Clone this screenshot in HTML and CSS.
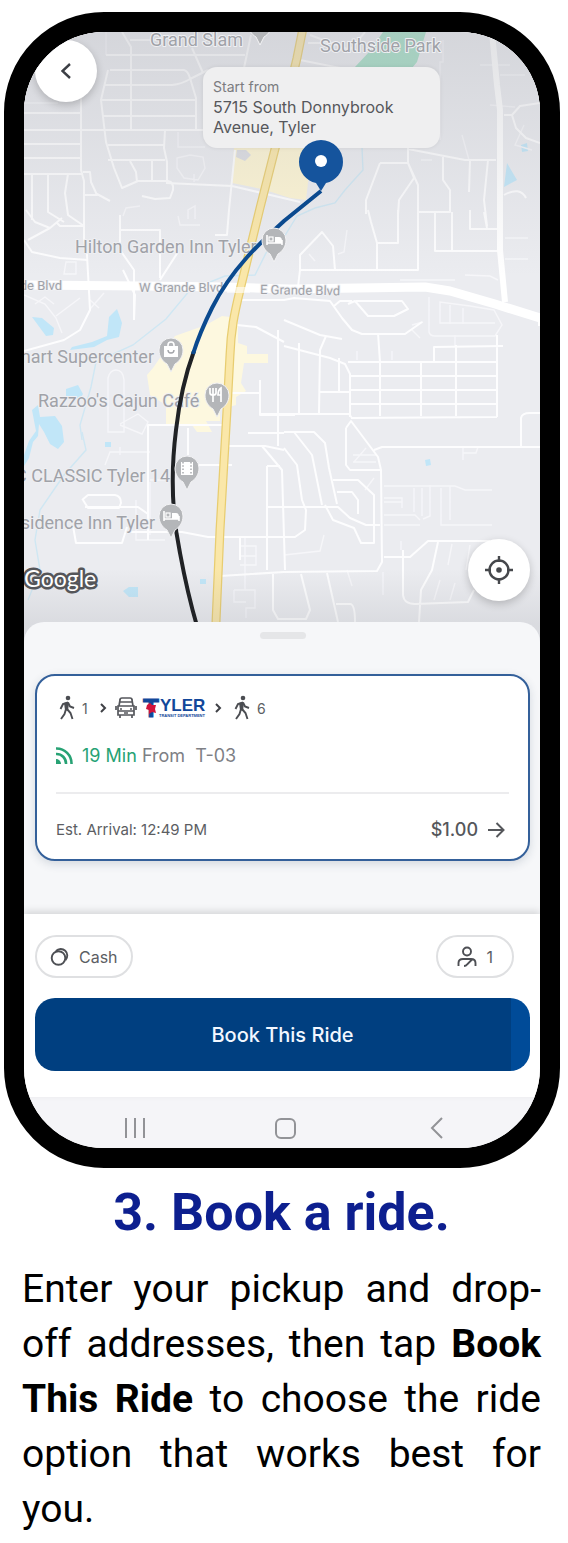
FILE: index.html
```html
<!DOCTYPE html>
<html lang="en">
<head>
    <meta charset="UTF-8">
    <meta name="viewport" content="width=device-width, initial-scale=1.0">
    <title>Book a ride</title>
    <link rel="stylesheet" href="styles.css">
</head>
<body>
    <div class="phone">
        <div class="map">
            <svg class="mapCanvas" viewBox="24 32 516 610" preserveAspectRatio="xMidYMin slice" role="img" aria-label="Route map">
                <defs>
                    <linearGradient id="shade" x1="0" y1="0" x2="0" y2="1">
                        <stop offset="0" stop-color="#a9abb2" stop-opacity="0.34"/>
                        <stop offset="0.4" stop-color="#a9abb2" stop-opacity="0"/>
                        <stop offset="0.88" stop-color="#8c8f96" stop-opacity="0"/>
                        <stop offset="0.97" stop-color="#8c8f96" stop-opacity="0.18"/>
                    </linearGradient>
                    <g id="poi">
                        <path d="M0 22 L-4 14 C-9 11 -12 6 -12 0 A12 12 0 0 1 12 0 C12 6 9 11 4 14 Z" fill="#b4b6b9" stroke="#f3f3f5" stroke-width="1"/>
                    </g>
                    <g id="bed" fill="none" stroke="#fff" stroke-width="1.6">
                        <path d="M-7 -5 V5 M-7 3 H8 V5 M8 3 V0"/>
                        <rect x="-5" y="-3" width="4" height="4" stroke-width="1.2"/>
                        <path d="M1 -3 H5 Q8 -3 8 1 V3 H1 Z" fill="#fff" stroke="none"/>
                    </g>
                </defs>
                <rect x="24" y="32" width="516" height="610" fill="#ebecf0"/>

                <!-- parks and commercial areas -->
                <path d="M383 32 H426 L417 62 L412 68 H354 L370 51 Z" fill="#a5dfc6"/>
                <path d="M234 148 H312 L306 200 L290 198 L262 189 L232 183 Z" fill="#fdf5d4"/>
                <path d="M237 150 h9 l5 5 -6 6 -9 -4 Z" fill="#dcdde2"/>
                <path d="M153 368 L175 336 L206 325 L222 316 L238 318 V343 L247 346 V354 H268 V363 H244 L241 383 L246 391 L236 397 V405 L220 410 V421 H206 L212 432 H197 L192 425 H166 V405 L150 395 L147 375 Z" fill="#fdf8df"/>

                <!-- water -->
                <g fill="#c1e6f8">
                    <path d="M32 317 L42 318 L54 328 L53 335 L46 336 Z"/>
                    <path d="M72 347 L92 342 L107 336 L109 317 L117 309 L122 323 L119 337 L107 340 L94 347 L70 350 Z"/>
                    <path d="M66 389 L78 385 L83 394 L80 399 L66 397 Z"/>
                    <path d="M32 410 L38 405 L40 417 L55 416 L62 426 L64 442 L58 449 L50 444 L44 432 L39 424 L38 436 L33 442 L29 458 L24 466 V455 L29 441 L36 431 Z"/>
                    <path d="M105 442 h6 v5 h-6 Z M123 591 l6 -4 h9 v10 h-9 Z M200 579 h6 v5 h-6 Z"/>
                    <path d="M425 460 l5 -1 1 6 -5 1 Z M507 163 L517 180 L504 187 Z M521 145 l6 -2 1 8 -6 1 Z"/>
                </g>
                <g fill="none" stroke="#cfe7f3" stroke-width="1.4">
                    <path d="M362 148 L363 170 L345 190 L335 203 L315 208 L297 216 L284 237 L266 253 L255 275 L225 276 L190 290 L166 319 L133 345 L96 362 L91 387 L80 425 L82 440"/>
                    <path d="M82 432 L86 450 L64 475 L40 510 L35 540 L40 570 L28 600"/>
                </g>

                <!-- faint streets -->
                <g fill="none" stroke="#f6f6f9" stroke-width="1.4">
                    <path d="M106 32 V55 M24 103 H58 M178 132 V147 H205 M177 158 L190 155 L203 157 L205 168 L198 180 L184 178 L177 168 Z M194 182 V174"/>
                    <path d="M123 216 L126 208 L140 206 M188 219 V210 L195 206 V219 M178 216 L180 225 H200 M64 274 H76 V262 H66 Z M24 295 L45 304 L56 318 L62 333 M35 304 L45 297 L54 304 M56 316 L80 298 M90 309 L104 293 M90 300 l9 8"/>
                    <path d="M108 400 V378 Q110 370 116 370 Q123 370 124 380 V432 H108 Z M120 425 L142 434 L148 422 L138 414 L120 424 M105 465 L110 452 H150 M120 455 V447 M150 480 H165 M136 500 V540 H165 M150 535 V482"/>
                    <path d="M443 40 V62 H440 V140 M480 65 H510 M490 105 L515 107 M500 75 H525 M524 125 L515 145 L532 150 M505 238 H528 M505 259 H528 M465 275 L490 276 L498 280"/>
                    <path d="M429 297 V332 Q430 336 435 336 H495 L502 325 L494 310 L470 306 L440 302 V323 H495 M450 305 V324 M463 308 V324 M455 335 V347 M357 360 v-9 M392 360 v-9"/>
                    <path d="M354 462 L366 448 M353 455 H376 M353 462 H376 M463 448 V460 M463 453 H476 L478 447 M384 486 H455 L465 490 H492 M384 498 H402 V508 M384 502 H402 M384 515 H415 L420 520 M414 488 V512 M422 488 V516 M430 485 V516 L423 519 M441 488 V525 H492 M450 486 V520"/>
                    <path d="M384 525 H420 M401 541 V550 M452 544 L448 565 M440 580 L434 600 M455 583 L450 600 M470 545 L466 570 M383 572 V595 M347 570 L352 586 M365 490 L374 478"/>
                    <path d="M284 555 L320 551 L324 535 M245 537 V575 M240 546 H256 V565 H240 M240 556 H256 M245 575 V590 M234 590 H255 V608 H246 V618 M234 590 V602 H246 M309 254 L315 261 M347 230 L344 252 L338 254"/>
                    <path d="M421 160 H432 M400 280 H455 M412 325 L423 322 M412 330 L420 338 M462 135 L469 160"/>
                </g>

                <!-- local streets -->
                <g fill="none" stroke="#fdfdfe" stroke-width="2" stroke-linejoin="round">
                    <path d="M24 113 H81 M24 130 H205 M24 144 H80 M24 158 H80 M24 174 H83 M81 98 V170 L84 181 V222"/>
                    <path d="M110 70 H184 Q188 71 190 78 L196 98 V130 M108 70 L101 100 L106 142 L114 168 L122 188 L138 181 H168 Q174 182 173 190 L170 198 L155 199 L142 196"/>
                    <path d="M104 85 H172 Q182 84 190 79 L208 70 M101 100 H195 M102 116 H195 M122 32 L131 47 V129 M130 40 H160 M106 55 H245 M192 48 L203 73 M251 35 L244 68"/>
                    <path d="M165 130 L164 148 L167 162 V182 M108 145 H164 M108 160 H165 M130 161 L136 172 L137 182 M152 161 V181 M166 183 L232 186 L262 193 L300 202 M235 150 L229 210 L227 235 H215"/>
                    <path d="M83 172 H90 L91 182 L97 195 H85 M97 194 L110 201 M32 174 V220 M48 174 V212 L64 222 M68 174 L65 193 L68 215 L84 226 M84 200 V240 L87 255 L90 310 L80 330 L64 340 L24 351"/>
                    <path d="M26 210 L35 222 L50 228 L28 240 M50 228 L62 218 M24 240 L32 252 L60 258 L88 260 M56 222 L60 226 H84 M123 270 L135 295 L134 320 M120 215 V250 L134 270 V320"/>
                    <path d="M120 230 H160 V278 M178 252 L160 280 M240 300 H284 L294 298 L330 301 L342 318 L352 330 L362 334 H405 L422 322 M237 325 L256 327 L284 342"/>
                    <path d="M284 346 L330 358 L345 364 L350 374 V417 M284 320 L320 335 L342 339 M326 336 L320 350 L319 413 M339 358 V392 M319 392 H349 M299 343 V414 M260 414 H349 L352 418"/>
                    <path d="M348 362 H497 M350 376 H497 M351 390 H497 M351 404 H497 M351 418 L497 417 M380 362 V416 M421 362 V416 M456 345 V416 M497 335 V417 M434 362 V347 L503 346 M378 333 L380 362"/>
                    <path d="M348 304 L355 301 L368 316 H394 L408 309 L402 301 H356 M334 306 L340 301 H352 M300 270 H418 V210 M300 270 V255 L322 232 L333 246 L335 270 M300 270 L297 295 M377 270 V243 L371 222 L368 210"/>
                    <path d="M377 243 H398 V210 M380 163 H408 L414 178 L399 200 L398 215 M366 214 V200 L380 163 M408 148 V163 L418 185 L418 212 H450 M418 212 H450 V190 L443 180 V157 M408 149 L465 160 H496 M470 160 L469 192 M488 160 L484 200 L487 226 M435 212 V251 H498 M452 212 V250 M470 210 V229 H498 M484 212 L487 228"/>
                    <path d="M504 115 H512 L520 106 L540 103 M512 115 L516 128 L526 138 L540 143 M504 195 Q520 186 526 198 M310 35 L350 50 L365 32 M308 43 H340 M300 60 L340 68"/>
                    <path d="M148 540 V425 H222 M188 428 V455 M188 465 H232 M228 446 H265 L284 450 M262 446 L282 470 L285 570 M260 380 V415 H295 M232 393 H260 M278 330 V446 M248 433 H284"/>
                    <path d="M267 466 H280 M267 466 V570 M268 507 H338 L350 518 L366 525 H380 M284 432 H314 L325 443 L329 468 L337 504 M294 432 L312 455 L322 505 M325 505 L333 520 L354 528 L361 543 H374 V495 L358 480 H333 M337 492 H352 L358 500 V514"/>
                    <path d="M284 448 L297 465 L302 500 L306 510 L305 530 L295 537 H284 M346 428 L351 421 L378 457 L381 470 L382 562 L377 571 L284 572 L220 576 M346 428 V465 L350 470 H380 M374 450 L382 447 H540 M521 447 V418 Q522 413 530 413 H540"/>
                    <path d="M384 557 H410 L428 541 H490 M403 550 V595 Q404 604 415 604 L468 602 L474 590 M438 542 L432 570 L421 590 L419 622 M301 574 L310 610 L306 619 H278 L273 610 V574 M327 573 L338 622 M336 604 H350 Q355 604 355 622"/>
                    <path d="M82 500 L88 495 H115 Q121 496 121 503 L119 508 H88 L83 500 M85 507 H138 L148 514 M73 526 L76 543 H122 L127 527 M127 532 H182 L208 537 H285 M240 537 V560"/>
                </g>

                <!-- main roads -->
                <g fill="none" stroke="#fff" stroke-linejoin="round">
                    <path d="M492 32 L497 85 L500 110 V250 L505 302" stroke-width="6"/>
                    <path d="M24 285 L142 286 L225 287 L290 289 L425 287 L450 291 L495 304 L540 318" stroke-width="9"/>
                    <path d="M540 318 V326" stroke-width="4"/>
                </g>

                <!-- highway -->
                <path d="M303 28 L297 58 L276 145 L260 208 L240 290 C234 315 231 330 230 355 L227 410 L220 530 L215 645" fill="none" stroke="#e8cd70" stroke-width="9"/>
                <path d="M303 28 L297 58 L276 145 L260 208 L240 290 C234 315 231 330 230 355 L227 410 L220 530 L215 645" fill="none" stroke="#fae7a9" stroke-width="6.5"/>
                <path d="M227 290 H250" fill="none" stroke="#fff" stroke-width="6" opacity="0.6"/>

                <rect x="24" y="32" width="516" height="610" fill="url(#shade)"/>

                <g class="place">
                    <text x="150" y="46">Grand Slam</text>
                    <text x="320" y="52">Southside Park</text>
                    <text x="75" y="253">Hilton Garden Inn Tyler</text>
                    <text x="154" y="363" text-anchor="end">Walmart Supercenter</text>
                    <text x="38" y="407">Razzoo's Cajun Café</text>
                    <text x="170" y="482" text-anchor="end">AMC CLASSIC Tyler 14</text>
                    <text x="155" y="529" text-anchor="end">Residence Inn Tyler</text>
                </g>
                <g class="road">
                    <text x="62" y="290" text-anchor="end">W Grande Blvd</text>
                    <text x="139" y="292">W Grande Blvd</text>
                    <text x="260" y="294" transform="rotate(1 260 294)">E Grande Blvd</text>
                </g>

                <!-- route -->
                <path d="M194 351 C187 370 180 395 176 430 C171 470 171 510 180 553 C185 580 190 602 197 626" fill="none" stroke="#202225" stroke-width="4"/>
                <path d="M321 191 L284 221 C262 241 232 268 212 308 C205 322 198 338 193 354" fill="none" stroke="#0b4a8f" stroke-width="4"/>

                <use href="#poi" x="260" y="23"/>
                <use href="#poi" x="274" y="240"/>
                <use href="#bed" x="274" y="240"/>
                <use href="#poi" x="171" y="350"/>
                <path d="M164 346 h14 v11 h-14 Z" fill="#fff"/>
                <path d="M168 347 v-2 a3 3 0 0 1 6 0 v2" fill="none" stroke="#fff" stroke-width="1.6"/>
                <path d="M168 350 a3 3 0 0 0 6 0" fill="none" stroke="#a4a6aa" stroke-width="1.4"/>
                <use href="#poi" x="217" y="395"/>
                <path d="M210 388 v5 q0 2 3 2 q3 0 3 -2 v-5 M213 388 v14 M221 402 v-14 q-3 2 -3 7 h3" fill="none" stroke="#fff" stroke-width="1.7"/>
                <use href="#poi" x="187" y="468"/>
                <rect x="181" y="462" width="12" height="13" fill="#fff"/>
                <path d="M183 462 V475 M191 462 V475" stroke="#a4a6aa" stroke-width="1.4" stroke-dasharray="1.5 1.8"/>
                <use href="#poi" x="171" y="516"/>
                <use href="#bed" x="171" y="516"/>

                <text class="google" x="24" y="587">Google</text>
            </svg>

            <div class="pickup">
                <span class="pickupLabel">Start from</span>
                <span class="pickupAddress">5715 South Donnybrook Avenue, Tyler</span>
            </div>
            <svg class="pickupPin" viewBox="0 0 46 54" aria-hidden="true">
                <path d="M23 52 L18 44 C8 42 1 33 1 23 A22 22 0 0 1 45 23 C45 33 38 42 28 44 Z" fill="#15549d"/>
                <circle cx="23" cy="22" r="6" fill="#fff"/>
            </svg>

            <button class="roundButton back" aria-label="Back">
                <svg width="24" height="24" viewBox="0 0 24 24"><path d="M16 5 L8.500 12 L16 19" fill="none" stroke="#3c3f45" stroke-width="2.400"/></svg>
            </button>
            <button class="roundButton locate" aria-label="My location">
                <svg width="30" height="30" viewBox="0 0 30 30" fill="none" stroke="#46484c" stroke-width="2.400">
                    <circle cx="15" cy="15" r="9.500"/>
                    <circle cx="15" cy="15" r="2.800" fill="#46484c" stroke="none"/>
                    <path d="M15 1 V7 M15 23 V29 M1 15 H7 M23 15 H29"/>
                </svg>
            </button>
        </div>

        <div class="sheet">
            <div class="handle"></div>
            <div class="trip">
                <div class="legs">
                    <svg class="walker" viewBox="0 0 18 26"><use href="#walk"/></svg>
                    <span class="minutes">1</span>
                    <svg class="chevron" viewBox="0 0 8 10"><path d="M2 1 L6 5 L2 9" fill="none" stroke="#3f4146" stroke-width="2"/></svg>
                    <svg class="bus" viewBox="0 0 22 22" fill="none" stroke="#55575c" stroke-width="1.700">
                        <path d="M4 9 L5 3 Q5 1 7 1 H15 Q17 1 17 3 L18 9 M5 5 H17 M3 9 H19 V18 H3 Z M3 14 H19 M1 9 V13 M21 9 V13 M5 18 V21 M17 18 V21"/>
                        <path d="M5 12 H7 M15 12 H17 M9 16 H13" stroke-width="1.500"/>
                    </svg>
                    <svg class="tyler" viewBox="0 0 62 22" role="img" aria-label="Tyler Transit Department">
                        <text class="tylerT" x="1" y="20">T</text>
                        <path d="M5 8 L8 6 L10 8 L14 8 L13 12 L14 16 L10 15 L7 17 L7 13 L4 12 Z" fill="#d0143c"/>
                        <text class="tylerName" x="18" y="14">YLER</text>
                        <text class="tylerDept" x="17" y="20">TRANSIT DEPARTMENT</text>
                    </svg>
                    <svg class="chevron" viewBox="0 0 8 10"><path d="M2 1 L6 5 L2 9" fill="none" stroke="#3f4146" stroke-width="2"/></svg>
                    <svg class="walker" viewBox="0 0 18 26">
                        <g id="walk">
                            <circle cx="10" cy="3" r="2.300" fill="#4b4d52"/>
                            <path d="M6 8 L10 7 L11 8 L10 16 L7 15 Z" fill="#4b4d52"/>
                            <path d="M10 7.500 L5 9 L2.500 14 M10 7.500 L12 11.500 L16 13 M8 14 L6.500 19 L3 24 M9 14 L12.500 18 L14.500 24" fill="none" stroke="#4b4d52" stroke-width="1.900"/>
                        </g>
                    </svg>
                    <span class="minutes">6</span>
                </div>
                <div class="departure">
                    <svg class="live" viewBox="0 0 17 17" fill="none" stroke="#27a274" stroke-width="2.600">
                        <path d="M0 1.500 A15 15 0 0 1 15.500 17 M0 7 A9.500 9.500 0 0 1 10 17"/>
                        <path d="M0 12 A5 5 0 0 1 5 17 H0 Z" fill="#27a274" stroke="none"/>
                    </svg>
                    <span><span class="wait">19 Min</span> From&nbsp; T-03</span>
                </div>
                <div class="fare">
                    <span>Est. Arrival: 12:49 PM</span>
                    <a class="price" href="#">$1.00
                        <svg width="18" height="18" viewBox="0 0 18 18" fill="none" stroke="#55575b" stroke-width="2"><path d="M1 9 H16 M9.500 2 L16.500 9 L9.500 16"/></svg>
                    </a>
                </div>
            </div>
        </div>

        <div class="booking">
            <div class="options">
                <button class="pill">
                    <svg width="20" height="20" viewBox="0 0 20 20" fill="none" stroke="#4d4f54" stroke-width="1.900">
                        <circle cx="8.500" cy="11" r="6.800"/>
                        <path d="M6 4 A6.500 6.500 0 1 1 15.500 13"/>
                    </svg>
                    Cash
                </button>
                <button class="pill riders" aria-label="1 rider">
                    <svg width="20" height="22" viewBox="0 0 20 22" fill="none" stroke="#4d4f54" stroke-width="1.900">
                        <circle cx="10" cy="5.500" r="4"/>
                        <path d="M1.500 20 V17 Q1.500 13 6 13 H14 Q18.500 13 18.500 17 V20 M7 20 Q9 20 10 18.500 L15 13.500"/>
                    </svg>
                    1
                </button>
            </div>
            <button class="book">Book This Ride</button>
        </div>

        <div class="navbar">
            <button aria-label="Recent apps"><svg width="22" height="22" viewBox="0 0 22 22" fill="none" stroke="#929397" stroke-width="2"><path d="M2 1 V21 M11 1 V21 M20 1 V21"/></svg></button>
            <button aria-label="Home"><svg width="22" height="22" viewBox="0 0 22 22" fill="none" stroke="#929397" stroke-width="2"><rect x="1" y="2" width="19" height="19" rx="5"/></svg></button>
            <button aria-label="Go back"><svg width="22" height="22" viewBox="0 0 22 22" fill="none" stroke="#929397" stroke-width="2"><path d="M16 1 L6 11 L16 21"/></svg></button>
        </div>
    </div>

    <div class="step">
        <h1>3. Book a ride.</h1>
        <p>Enter your pickup and drop-off addresses, then tap <b>Book This Ride</b> to choose the ride option that works best for you.</p>
    </div>
</body>
</html>
```

FILE: styles.css
```css
* { box-sizing: border-box }
body {
    margin: 0;
    padding: 12px 8px 0 4px;
    background: #fff;
    font-family: Inter, "Liberation Sans", sans-serif;
    color: #5c5e63;
}
button { font: inherit; color: inherit; border: 0; padding: 0; cursor: pointer; }
svg { display: block; flex: none; }

.phone {
    border: 20px solid #000;
    border-radius: 100px;
    overflow: hidden;
    background: #fff;
}

/* map */
.map { position: relative; height: 610px; background: #ebecf0; }
.mapCanvas { width: 100%; height: 100%; }
.place, .road {
    font-family: Roboto, sans-serif;
    font-size: 18px;
    fill: #a0a2a8;
    stroke: #eff0f3;
    stroke-width: 2px;
    stroke-linejoin: round;
    paint-order: stroke;
}
.road { font-size: 13px; }
.google {
    font-family: Lato, sans-serif;
    font-size: 23px;
    font-weight: 400;
    fill: #fff;
    stroke: #55565a;
    stroke-width: 5px;
    stroke-linejoin: round;
    paint-order: stroke;
}
.pickup {
    position: absolute;
    left: 179px;
    top: 35px;
    width: 237px;
    padding: 10px 10px 11px;
    border-radius: 14px;
    background: #efeff0;
    box-shadow: 0 0 4px rgba(0, 0, 0, 0.08);
}
.pickupLabel { display: block; font-size: 14px; line-height: 20px; color: #7b7c80; }
.pickupAddress { display: block; font-size: 16px; line-height: 20px; color: #56575b; }
.pickupPin { position: absolute; left: 274px; top: 107px; width: 46px; height: 54px; }
.roundButton {
    position: absolute;
    display: flex;
    align-items: center;
    justify-content: center;
    width: 62px;
    height: 62px;
    border-radius: 50%;
    background: #fff;
    box-shadow: 0 3px 8px rgba(0, 0, 0, 0.2);
}
.back { left: 11px; top: 8px; }
.locate { right: 10px; bottom: 41px; }

/* trip sheet */
.sheet {
    position: relative;
    margin-top: -20px;
    padding: 10px 10px 53px 11px;
    border-radius: 20px 20px 0 0;
    background: #f6f7f9;
}
.handle { width: 46px; height: 7px; margin: 0 auto 35px; border-radius: 4px; background: #e5e6e8; }
.trip {
    padding: 18px 19px 15px;
    border: 2px solid #34609a;
    border-radius: 20px;
    background: #fff;
    box-shadow: 0 3px 10px rgba(40, 60, 90, 0.16);
}
.legs { display: flex; align-items: center; height: 28px; padding-left: 2px; }
.walker { width: 18px; height: 26px; }
.minutes { width: 8px; margin: 0 9px 0 6px; font-size: 14px; }
.chevron { width: 8px; height: 10px; }
.bus { width: 22px; height: 22px; margin: 0 5px 0 8px; }
.tyler { width: 62px; height: 22px; margin-right: 10px; overflow: visible; }
.tyler + .chevron { margin-right: 11px; }
.tylerT, .tylerName, .tylerDept { font-family: "Liberation Sans", sans-serif; font-weight: 700; fill: #12479a; }
.tylerT { font-size: 26px; stroke: #12479a; }
.tylerName { font-size: 17px; }
.tylerDept { font-size: 4px; }
.departure {
    display: flex;
    align-items: center;
    gap: 9px;
    height: 70px;
    padding-bottom: 3px;
    font-size: 18px;
    color: #7e8085;
}
.live { width: 17px; height: 17px; }
.wait { color: #27a274; }
.fare {
    display: flex;
    align-items: center;
    justify-content: space-between;
    padding: 22px 4px 0 0;
    border-top: 2px solid #ececee;
    font-size: 15px;
    line-height: 28px;
}
.price {
    display: flex;
    align-items: center;
    gap: 9px;
    font-size: 18px;
    font-weight: 500;
    color: #55575b;
    text-decoration: none;
}

/* payment and booking */
.booking {
    position: relative;
    padding: 21px 10px 26px 11px;
    background: #fff;
    box-shadow: 0 -3px 7px rgba(0, 0, 0, 0.13);
}
.options { display: flex; justify-content: space-between; padding-right: 16px; }
.pill {
    display: flex;
    align-items: center;
    gap: 9px;
    height: 43px;
    padding: 0 13px;
    border: 2px solid #dfe0e2;
    border-radius: 22px;
    background: #fff;
    font-size: 16px;
}
.riders { padding: 0 19px; }
.book {
    width: 100%;
    height: 73px;
    margin-top: 20px;
    border-radius: 20px;
    background: linear-gradient(to left, #004b98 19px, #003f80 19px);
    color: #f2f7ff;
    font-size: 20px;
    font-weight: 500;
}
.navbar {
    display: flex;
    justify-content: center;
    gap: 129px;
    height: 51px;
    padding: 20px 0 9px 8px;
    background: #f5f5f8;
}
.navbar button { background: none; }

/* instructions */
.step { padding: 16px 19px 0 18px; font-family: Roboto, sans-serif; color: #000; }
.step h1 { margin: 0; font-size: 52px; line-height: 58px; font-weight: 700; text-align: center; color: #0d1f8f; }
.step p { margin: 20px 0 0; font-size: 39px; line-height: 55px; text-align: justify; }
```
